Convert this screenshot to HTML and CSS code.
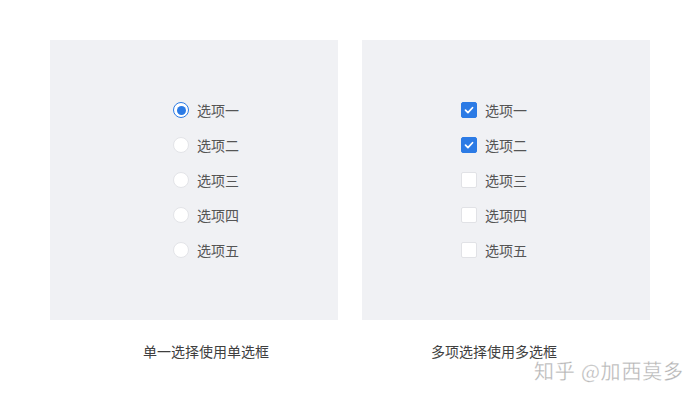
FILE: index.html
```html
<!DOCTYPE html>
<html lang="zh">
<head>
<meta charset="utf-8">
<link rel="stylesheet" href="styles.css">
</head>
<body>
<div class="page">
  <div class="col col-left">
    <div class="panel">
      <ul class="list">
        <li class="item"><span class="radio checked"></span><span class="label">选项一</span></li>
        <li class="item"><span class="radio"></span><span class="label">选项二</span></li>
        <li class="item"><span class="radio"></span><span class="label">选项三</span></li>
        <li class="item"><span class="radio"></span><span class="label">选项四</span></li>
        <li class="item"><span class="radio"></span><span class="label">选项五</span></li>
      </ul>
    </div>
    <div class="caption">单一选择使用单选框</div>
  </div>
  <div class="col col-right">
    <div class="panel">
      <ul class="list">
        <li class="item"><span class="check checked"><svg viewBox="0 0 16 16" width="16" height="16"><path d="M4 8.2 L6.8 11 L12 5.4" fill="none" stroke="#fff" stroke-width="2" stroke-linecap="round" stroke-linejoin="round"/></svg></span><span class="label">选项一</span></li>
        <li class="item"><span class="check checked"><svg viewBox="0 0 16 16" width="16" height="16"><path d="M4 8.2 L6.8 11 L12 5.4" fill="none" stroke="#fff" stroke-width="2" stroke-linecap="round" stroke-linejoin="round"/></svg></span><span class="label">选项二</span></li>
        <li class="item"><span class="check"></span><span class="label">选项三</span></li>
        <li class="item"><span class="check"></span><span class="label">选项四</span></li>
        <li class="item"><span class="check"></span><span class="label">选项五</span></li>
      </ul>
    </div>
    <div class="caption">多项选择使用多选框</div>
  </div>
</div>
<div class="watermark">知乎 @加西莫多</div>
</body>
</html>
```
FILE: styles.css
```css
html, body {
  margin: 0;
  padding: 0;
  background: #ffffff;
  width: 700px;
  height: 400px;
  overflow: hidden;
  font-family: "Noto Sans CJK SC", "Noto Sans", sans-serif;
}
.page {
  display: flex;
  gap: 24px;
  padding: 40px 0 0 50px;
}
.col {
  width: 288px;
  display: flex;
  flex-direction: column;
}
.panel {
  height: 280px;
  background: #f0f1f4;
  display: flex;
  align-items: center;
  justify-content: center;
}
.col-left .panel, .col-left .caption { padding-left: 24px; }
.col-right .panel, .col-right .caption { padding-right: 24px; }
.list {
  list-style: none;
  margin: 0;
  padding: 0;
}
.item {
  height: 35px;
  display: flex;
  align-items: center;
}
.label {
  font-size: 14px;
  color: #555;
  line-height: 20px;
  margin-top: -1px;
}
.radio {
  width: 14px;
  height: 14px;
  border-radius: 50%;
  background: #fff;
  border: 1px solid #e3e4e8;
  margin-right: 8px;
  box-sizing: content-box;
  display: flex;
  align-items: center;
  justify-content: center;
}
.radio.checked {
  border-color: #2c7be5;
}
.radio.checked::after {
  content: "";
  width: 9px;
  height: 9px;
  border-radius: 50%;
  background: #2c7be5;
}
.check {
  width: 14px;
  height: 14px;
  border: 1px solid #e1e2e6;
  border-radius: 2px;
  background: #fff;
  margin-right: 8px;
  display: flex;
  align-items: center;
  justify-content: center;
}
.check.checked {
  background: #2c7be5;
  border-color: #2c7be5;
}
.check svg {
  width: 14px;
  height: 14px;
}
.caption {
  margin-top: 21px;
  text-align: center;
  font-size: 14px;
  line-height: 20px;
  color: #3f3f3f;
}
.watermark {
  position: absolute;
  left: 534px;
  top: 357px;
  font-size: 20px;
  line-height: 28px;
  color: rgba(160, 160, 160, 0.8);
  letter-spacing: 0.8px;
  -webkit-text-stroke: 0.3px #ffffff;
  font-family: "Noto Sans CJK SC", sans-serif;
}
```
